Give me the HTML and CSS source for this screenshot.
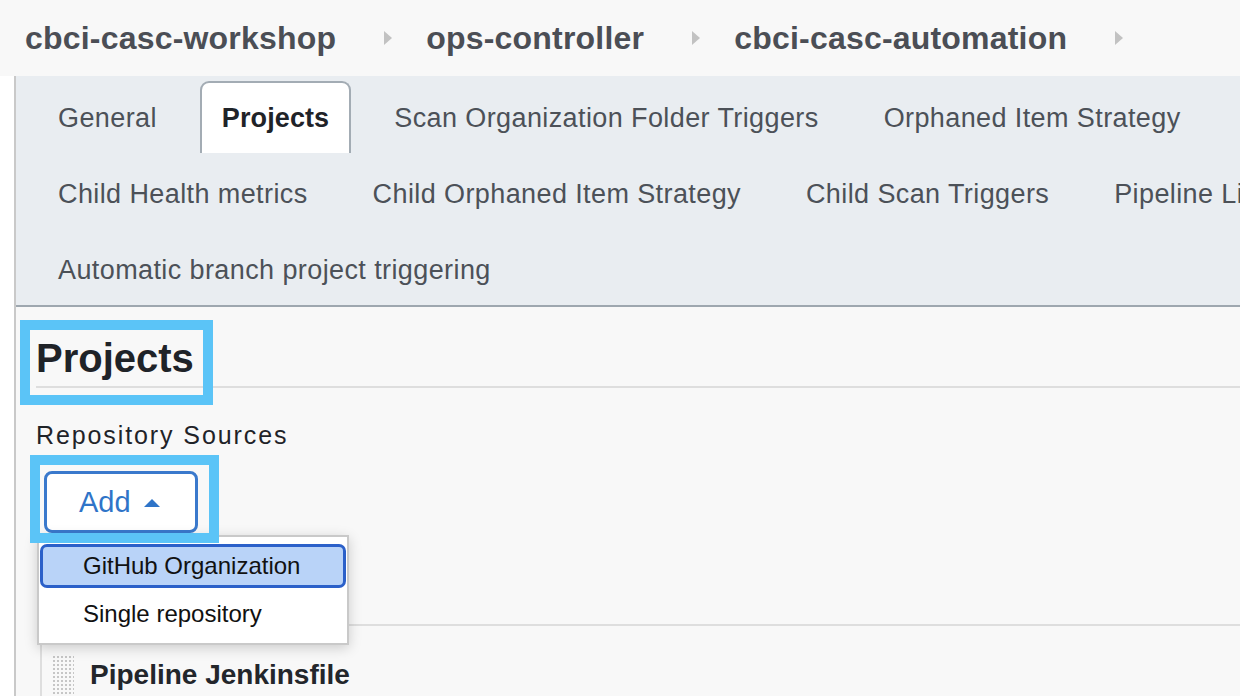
FILE: index.html
```html
<!DOCTYPE html>
<html lang="en">
<head>
<meta charset="utf-8">
<title>cbci-casc-automation – Projects</title>
<link rel="stylesheet" href="styles.css">
</head>
<body>
<header class="crumbs">
  <a class="crumb">cbci-casc-workshop</a><span class="sep"></span>
  <a class="crumb">ops-controller</a><span class="sep"></span>
  <a class="crumb">cbci-casc-automation</a><span class="sep"></span>
</header>
<div class="page">
  <aside class="side"></aside>
  <main class="main">
    <nav class="tabs">
      <span class="tab">General</span>
      <span class="tab active">Projects</span>
      <span class="tab">Scan Organization Folder Triggers</span>
      <span class="tab">Orphaned Item Strategy</span>
      <span class="tab">Child Health metrics</span>
      <span class="tab">Child Orphaned Item Strategy</span>
      <span class="tab">Child Scan Triggers</span>
      <span class="tab">Pipeline Libraries</span>
      <span class="tab">Automatic branch project triggering</span>
    </nav>
    <section class="content">
      <h2 class="section-title">Projects</h2>
      <div class="label">Repository Sources</div>
      <button class="add-btn"><span>Add</span><span class="caret"></span></button>
      <div class="repeat">
        <div class="repeat-head">
          <span class="handle"></span>
          <span class="repeat-title">Pipeline Jenkinsfile</span>
        </div>
      </div>
      <ul class="menu">
        <li class="menu-item selected">GitHub Organization</li>
        <li class="menu-item">Single repository</li>
      </ul>
      <div class="mark mark-title"></div>
      <div class="mark mark-add"></div>
    </section>
  </main>
</div>
</body>
</html>
```

FILE: styles.css
```css
html, body {
  margin: 0;
  padding: 0;
  width: 1240px;
  height: 696px;
  overflow: hidden;
  background: #f8f8f8;
  font-family: "Liberation Sans", Arial, Helvetica, sans-serif;
}

.crumbs {
  height: 76px;
  background: #f8f8f8;
  display: flex;
  align-items: center;
  padding-left: 25px;
  box-sizing: border-box;
}

.crumb {
  font-size: 32px;
  font-weight: bold;
  letter-spacing: 0.2px;
  color: #4b4e55;
  text-decoration: none;
}

.sep {
  width: 0;
  height: 0;
  border-top: 7.5px solid transparent;
  border-bottom: 7.5px solid transparent;
  border-left: 8px solid #c2c2c2;
  margin: 0 34px 0 48px;
}

.page {
  display: flex;
  height: 620px;
}

.side {
  width: 14px;
  flex: none;
  background: #ffffff;
  border-right: 2px solid #c9c9c9;
}

.main {
  width: 1440px;
  flex: none;
  background: #f8f8f8;
}

.tabs {
  background: #e9edf1;
  display: flex;
  flex-wrap: wrap;
  padding: 5px 20px 0;
  row-gap: 4px;
  column-gap: 21px;
  border-bottom: 2px solid #9ea7af;
}

.tab {
  height: 72px;
  box-sizing: border-box;
  padding: 0 20px;
  border: 2px solid transparent;
  border-bottom: 0;
  display: flex;
  align-items: center;
  font-size: 27px;
  letter-spacing: 0.4px;
  color: #4c5158;
  white-space: nowrap;
}

.tab.active {
  background: #ffffff;
  border-color: #a3acb4;
  border-radius: 9px 9px 0 0;
  font-weight: bold;
  letter-spacing: 0.1px;
  color: #1f2328;
}

.content {
  position: relative;
  padding: 27px 20px 0;
}

.section-title {
  margin: 0;
  font-size: 40px;
  line-height: 48px;
  font-weight: bold;
  color: #1f2328;
  padding-bottom: 4px;
  border-bottom: 2px solid #dedede;
}

.label {
  margin-top: 32px;
  font-size: 25px;
  line-height: 30px;
  letter-spacing: 1.9px;
  color: #1f2328;
}

.add-btn {
  margin: 21px 0 0 8px;
  height: 62px;
  box-sizing: border-box;
  display: flex;
  align-items: center;
  gap: 13px;
  padding: 0 35px 0 32px;
  background: #ffffff;
  border: 3px solid #3a79cc;
  border-radius: 8px;
  font-family: "Liberation Sans", Arial, sans-serif;
  font-size: 29px;
  color: #2f74c8;
}

.caret {
  width: 0;
  height: 0;
  border-left: 8.5px solid transparent;
  border-right: 8.5px solid transparent;
  border-bottom: 8px solid #2f74c8;
  margin-top: 2px;
}

.repeat {
  margin: 91px 0 0 4px;
  border-top: 2px solid #dedede;
  border-left: 2px solid #dedede;
  height: 120px;
}

.repeat-head {
  display: flex;
  align-items: flex-start;
  gap: 16px;
  padding: 29px 0 0 10px;
}

.handle {
  width: 22px;
  height: 50px;
  flex: none;
  background-image: radial-gradient(circle, #c6c6c6 1px, transparent 1.4px);
  background-size: 4px 4px;
}

.repeat-title {
  margin-top: 3px;
  font-size: 28px;
  line-height: 34px;
  font-weight: bold;
  color: #23262b;
}

.menu {
  position: absolute;
  left: 21px;
  top: 228px;
  width: 312px;
  box-sizing: border-box;
  margin: 0;
  padding: 7px 1px;
  list-style: none;
  background: #ffffff;
  border: 2px solid #c9c9c9;
  box-shadow: 0 3px 12px rgba(0, 0, 0, 0.18);
  display: flex;
  flex-direction: column;
  gap: 4px;
  z-index: 2;
}

.menu-item {
  height: 44px;
  box-sizing: border-box;
  display: flex;
  align-items: center;
  padding-left: 40px;
  border: 3px solid transparent;
  border-radius: 7px;
  font-size: 24px;
  color: #111111;
}

.menu-item.selected {
  background: #b9d3f8;
  border-color: #2b60c9;
}

.mark {
  position: absolute;
  border: 10px solid #5bc4f7;
  box-sizing: border-box;
  z-index: 3;
}

.mark-title {
  left: 4px;
  top: 13px;
  width: 193px;
  height: 85px;
}

.mark-add {
  left: 14px;
  top: 148px;
  width: 189px;
  height: 88px;
}
```
